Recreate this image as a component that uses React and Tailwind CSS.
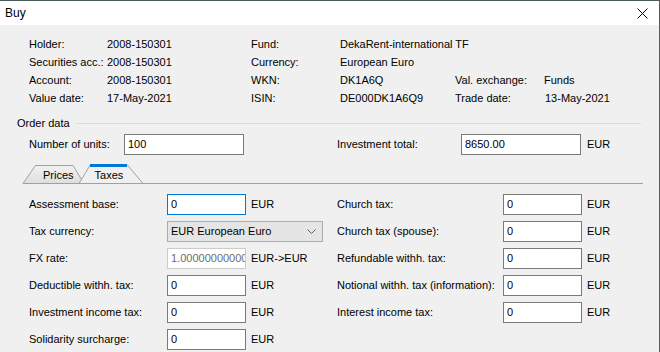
import React from 'react';

// --- Small building blocks ---
const InfoRow = ({ cells }) => (
    <div className="flex h-[18px] items-center">
        {cells.map(([text, w], i) => (
            <span key={i} className={`${w} shrink-0 whitespace-nowrap`}>{text}</span>
        ))}
    </div>
);

const TextBox = ({ value, width = 'w-[79px]', focused = false, disabled = false }) => (
    <div className={`${width} h-[21px] shrink-0 flex items-center pl-[3px] bg-white border overflow-hidden whitespace-nowrap ${focused ? 'border-[#0078d7]' : disabled ? 'border-[#cccccc] text-[#6d6d6d]' : 'border-[#7a7a7a]'}`}>
        {value}
    </div>
);

const TaxRow = ({ label, labelWidth, children, unit = 'EUR' }) => (
    <div className="flex items-center h-[21px]">
        <span className={`${labelWidth} shrink-0 whitespace-nowrap`}>{label}</span>
        {children}
        {unit && <span className="ml-[5px] whitespace-nowrap">{unit}</span>}
    </div>
);

const TabStrip = () => (
    <div className="relative h-[20px]">
        <svg className="absolute inset-0" width="660" height="20" viewBox="0 0 660 20">
            <defs>
                <linearGradient id="tabg" x1="0" y1="0" x2="0" y2="1">
                    <stop offset="0" stopColor="#f2f2f2" />
                    <stop offset="1" stopColor="#dedede" />
                </linearGradient>
            </defs>
            <polygon points="23,19.5 35.5,1.5 73,1.5 84,19.5" fill="url(#tabg)" stroke="#a0a0a0" strokeWidth="1" />
            <polygon points="79,19.5 90.5,0.5 127,0.5 143,19.5" fill="#f0f0f0" stroke="#a0a0a0" strokeWidth="1" />
            <rect x="90" y="0" width="37" height="3" fill="#0078d7" />
            <line x1="143" y1="19.5" x2="643" y2="19.5" stroke="#a0a0a0" strokeWidth="1" />
        </svg>
        <div className="relative flex h-full items-center pt-[3px]">
            <span className="ml-[43px]">Prices</span>
            <span className="ml-[21px]">Taxes</span>
        </div>
    </div>
);

const Chevron = () => (
    <svg width="9" height="6" viewBox="0 0 9 6" className="mr-[6px]">
        <path d="M0.5 0.5 L4.5 4.5 L8.5 0.5" fill="none" stroke="#606060" strokeWidth="1" />
    </svg>
);

export default function App() {
    const left = 'w-[138px]';
    const right = 'w-[166px]';

    return (
        <div className="w-[660px] h-[352px] overflow-hidden bg-[#f0f0f0] border-r border-[#5a5a5a] text-[11px] text-black" style={{ fontFamily: '"Liberation Sans", Arial, sans-serif' }}>
            {/* Title bar */}
            <div className="h-[25px] bg-white flex items-center justify-between border-t border-[#4a5a5a]">
                <span className="ml-[5px] text-[12px]">Buy</span>
                <svg width="11" height="11" viewBox="0 0 11 11" className="mr-[11px]">
                    <path d="M0.5 0.5 L10.5 10.5 M10.5 0.5 L0.5 10.5" stroke="#000" strokeWidth="1" />
                </svg>
            </div>

            {/* Header info */}
            <div className="pl-[29px] pt-[10px]">
                <InfoRow cells={[['Holder:', 'w-[78px]'], ['2008-150301', 'w-[144px]'], ['Fund:', 'w-[89px]'], ['DekaRent-international TF', 'w-[200px]']]} />
                <InfoRow cells={[['Securities acc.:', 'w-[78px]'], ['2008-150301', 'w-[144px]'], ['Currency:', 'w-[89px]'], ['European Euro', 'w-[200px]']]} />
                <InfoRow cells={[['Account:', 'w-[78px]'], ['2008-150301', 'w-[144px]'], ['WKN:', 'w-[89px]'], ['DK1A6Q', 'w-[115px]'], ['Val. exchange:', 'w-[89px]'], ['Funds', 'w-[80px]']]} />
                <InfoRow cells={[['Value date:', 'w-[78px]'], ['17-May-2021', 'w-[144px]'], ['ISIN:', 'w-[89px]'], ['DE000DK1A6Q9', 'w-[115px]'], ['Trade date:', 'w-[90px]'], ['13-May-2021', 'w-[80px]']]} />
            </div>

            {/* Order data group */}
            <div className="mt-[9px] h-[14px] flex items-center pl-[17px]">
                <span className="whitespace-nowrap">Order data</span>
                <div className="ml-[6px] w-[565px] h-px bg-[#dcdcdc]" />
            </div>

            <div className="mt-[4px] flex items-center pl-[29px]">
                <span className="w-[95px] shrink-0">Number of units:</span>
                <TextBox value="100" width="w-[120px]" />
                <span className="w-[93px] shrink-0" />
                <span className="w-[124px] shrink-0">Investment total:</span>
                <TextBox value="8650.00" width="w-[120px]" />
                <span className="ml-[6px]">EUR</span>
            </div>

            <div className="mt-[9px]">
                <TabStrip />
            </div>

            {/* Taxes page */}
            <div className="mt-[10px] flex pl-[29px]">
                <div className="w-[308px] flex flex-col gap-[6px]">
                    <TaxRow label="Assessment base:" labelWidth={left}><TextBox value="0" focused /></TaxRow>
                    <TaxRow label="Tax currency:" labelWidth={left} unit={null}>
                        <div className="w-[156px] h-[21px] flex items-center justify-between pl-[3px] bg-[#e5e5e5] border border-[#adadad]">
                            <span>EUR European Euro</span>
                            <Chevron />
                        </div>
                    </TaxRow>
                    <TaxRow label="FX rate:" labelWidth={left} unit="EUR->EUR"><TextBox value="1.000000000000" disabled /></TaxRow>
                    <TaxRow label="Deductible withh. tax:" labelWidth={left}><TextBox value="0" /></TaxRow>
                    <TaxRow label="Investment income tax:" labelWidth={left}><TextBox value="0" /></TaxRow>
                    <TaxRow label="Solidarity surcharge:" labelWidth={left}><TextBox value="0" /></TaxRow>
                </div>
                <div className="flex flex-col gap-[6px]">
                    <TaxRow label="Church tax:" labelWidth={right}><TextBox value="0" /></TaxRow>
                    <TaxRow label="Church tax (spouse):" labelWidth={right}><TextBox value="0" /></TaxRow>
                    <TaxRow label="Refundable withh. tax:" labelWidth={right}><TextBox value="0" /></TaxRow>
                    <TaxRow label="Notional withh. tax (information):" labelWidth={right}><TextBox value="0" /></TaxRow>
                    <TaxRow label="Interest income tax:" labelWidth={right}><TextBox value="0" /></TaxRow>
                </div>
            </div>
        </div>
    );
}
